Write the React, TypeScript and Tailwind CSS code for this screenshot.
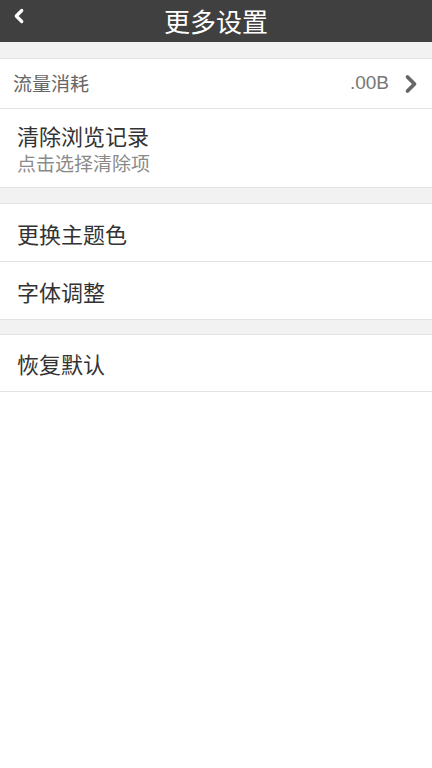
import { ChevronLeft, ChevronRight } from "lucide-react"

const font = { fontFamily: '"Noto Sans CJK SC", "Noto Sans", sans-serif' }

function Row({ title, sub, className }: { title: string; sub?: string; className: string }) {
  return (
    <div className={`flex flex-col justify-center bg-white pl-[17px] ${className}`}>
      <div className="text-[22px] leading-[26px] text-[#333]">{title}</div>
      {sub && <div className="mt-[4px] text-[19px] leading-[21px] text-[#8a8a8a]">{sub}</div>}
    </div>
  )
}

export default function App() {
  return (
    <div className="min-h-[768px] w-[432px] bg-white" style={font}>
      <header className="relative flex h-[42px] items-center justify-center bg-[#404040]">
        <ChevronLeft className="absolute left-[8px] top-[5px] h-[22px] w-[22px] text-white" strokeWidth={3.5} />
        <h1 className="text-[26px] leading-none text-white">更多设置</h1>
      </header>

      <div className="h-[16px] bg-[#f2f2f2]" />
      <section className="border-y border-[#e2e2e2]">
        <div className="flex h-[50px] items-center justify-between border-b border-[#e2e2e2] bg-white pl-[13px] pr-[7px]">
          <span className="text-[19px] text-[#666]">流量消耗</span>
          <div className="flex items-center gap-[8px]">
            <span className="text-[19px] text-[#777]" style={{ fontFamily: '"Liberation Sans", Arial, sans-serif' }}>.00B</span>
            <ChevronRight className="h-[28px] w-[28px] text-[#666]" strokeWidth={3.2} />
          </div>
        </div>
        <Row title="清除浏览记录" sub="点击选择清除项" className="h-[78px] pb-[2px]" />
      </section>

      <div className="h-[15px] bg-[#f2f2f2]" />
      <section className="border-y border-[#e2e2e2]">
        <Row title="更换主题色" className="h-[58px] border-b border-[#e2e2e2]" />
        <Row title="字体调整" className="h-[57px]" />
      </section>

      <div className="h-[14px] bg-[#f2f2f2]" />
      <section className="border-y border-[#e2e2e2]">
        <Row title="恢复默认" className="h-[56px]" />
      </section>
    </div>
  )
}
